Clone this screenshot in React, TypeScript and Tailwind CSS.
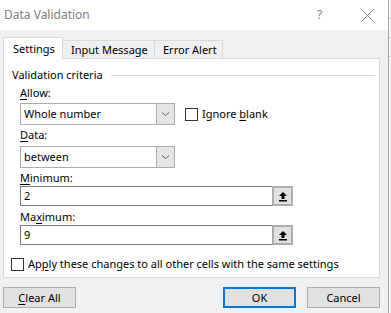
import React from "react";

const U = ({ children }: { children: React.ReactNode }) => <span className="underline underline-offset-[2px]">{children}</span>;

const Chevron = () => (
  <svg width="9" height="6" viewBox="0 0 9 6" fill="none">
    <path d="M1 1.5 L4.5 4.5 L8 1.5" stroke="#606060" strokeWidth="1" />
  </svg>
);

const SpinArrow = () => (
  <svg width="10" height="11" viewBox="0 0 10 11">
    <path d="M5 1 L9 5 L6.5 5 L6.5 8 L3.5 8 L3.5 5 L1 5 Z" fill="#000" />
    <rect x="1" y="9" width="8" height="1.5" fill="#000" />
  </svg>
);

const Select = ({ value }: { value: string }) => (
  <div className="flex h-[22px] w-[155px] border border-[#adadad] bg-white">
    <div className="flex-1 flex items-center pl-[3px] text-black">{value}</div>
    <div className="w-[18px] flex items-center justify-center bg-[#e5e5e5] border-l border-[#adadad]">
      <Chevron />
    </div>
  </div>
);

const NumInput = ({ value }: { value: string }) => (
  <div className="flex h-[20px] w-[273px] border border-[#7a7a7a] bg-white">
    <div className="flex-1 flex items-center pl-[3px] text-black">{value}</div>
    <div className="w-[21px] -my-[1px] -mr-[1px] flex items-center justify-center bg-[#e1e1e1] border-2 border-[#adadad]">
      <SpinArrow />
    </div>
  </div>
);

const Checkbox = () => <div className="w-[13px] h-[13px] border border-[#333] bg-white shrink-0" />;

export default function App() {
  return (
    <div
      className="w-[391px] h-[313px] flex overflow-hidden text-[11px] leading-[14px] text-black bg-[#f0f0f0]"
      style={{ fontFamily: '"Noto Sans", "Segoe UI", sans-serif' }}
    >
      <div className="w-[388px] flex flex-col">
        <div className="h-[30px] shrink-0 bg-white flex items-center pl-[4px] pr-[14px] text-[#808080] text-[12px]">
          <div className="flex-1">Data Validation</div>
          <div className="w-[10px] mr-[34px] text-[#808080]">?</div>
          <svg width="13" height="13" viewBox="0 0 13 13">
            <path d="M0.5 0.5 L12.5 12.5 M12.5 0.5 L0.5 12.5" stroke="#808080" strokeWidth="1" />
          </svg>
        </div>
        <div className="flex-1 bg-[#f0f0f0] pl-[3px] pr-[8px] pt-[7px]">
          <div className="flex items-end h-[21px] whitespace-nowrap">
            <div className="w-[60px] h-[22px] bg-white border border-b-0 border-[#d9d9d9] flex items-center pl-[9px] relative z-10 -mb-[1px]">
              Settings
            </div>
            <div className="w-[92px] h-[18px] border border-l-0 border-b-0 border-[#d9d9d9] flex items-center pl-[8px]">
              Input Message
            </div>
            <div className="w-[68px] h-[18px] border border-l-0 border-b-0 border-[#d9d9d9] flex items-center pl-[8px]">
              Error Alert
            </div>
          </div>
          <div className="h-[220px] bg-white border border-[#d9d9d9] flex flex-col whitespace-nowrap">
            <div className="flex items-center mt-[8px] pl-[8px] pr-[4px] h-[16px]">
              <span>Validation criteria</span>
              <div className="flex-1 h-px bg-[#dcdcdc] ml-[8px]" />
            </div>
            <div className="pl-[16px] mt-[3px] h-[14px] flex items-center"><span><U>A</U>llow:</span></div>
            <div className="pl-[16px] mt-[3px] flex items-center">
              <Select value="Whole number" />
              <div className="ml-[10px] flex items-center">
                <Checkbox />
                <span className="ml-[4px]">Ignore <U>b</U>lank</span>
              </div>
            </div>
            <div className="pl-[16px] mt-[3px] h-[14px] flex items-center"><span><U>D</U>ata:</span></div>
            <div className="pl-[16px] mt-[4px]">
              <Select value="between" />
            </div>
            <div className="pl-[16px] mt-[3px] h-[14px] flex items-center"><span><U>M</U>inimum:</span></div>
            <div className="pl-[16px] mt-[1px]">
              <NumInput value="2" />
            </div>
            <div className="pl-[16px] mt-[4px] h-[14px] flex items-center"><span>Ma<U>x</U>imum:</span></div>
            <div className="pl-[16px] mt-[1px]">
              <NumInput value="9" />
            </div>
            <div className="pl-[7px] mt-[12px] flex items-center">
              <Checkbox />
              <span className="ml-[4px]">Ap<U>p</U>ly these changes to all other cells with the same settings</span>
            </div>
          </div>
          <div className="flex mt-[9px] h-[21px]">
            <div className="w-[73px] border border-[#adadad] bg-[#e1e1e1] flex items-center justify-center">
              <span><U>C</U>lear All</span>
            </div>
            <div className="flex-1" />
            <div className="w-[73px] border-2 border-[#0078d7] bg-[#e1e1e1] flex items-center justify-center">OK</div>
            <div className="w-[73px] ml-[11px] border border-[#adadad] bg-[#e1e1e1] flex items-center justify-center">Cancel</div>
          </div>
        </div>
      </div>
      <div className="w-[3px] border-l border-[#a8a8a8] bg-[#f7f7f7] flex flex-col">
        <div className="h-[19px] border-b border-[#d4d4d4]" />
        <div className="h-[19px] border-b border-[#d4d4d4]" />
        <div className="h-[19px] border-b border-[#d4d4d4]" />
      </div>
    </div>
  );
}
